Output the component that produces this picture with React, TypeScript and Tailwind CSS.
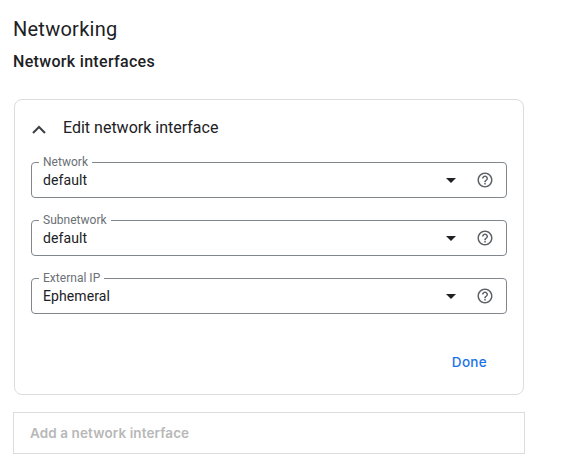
import React from "react";

function HelpIcon() {
  return (
    <svg className="block h-[18px] w-[18px]" viewBox="0 0 24 24" fill="#5f6368">
      <path d="M11 18h2v-2h-2v2zm1-16C6.48 2 2 6.48 2 12s4.48 10 10 10 10-4.48 10-10S17.52 2 12 2zm0 18c-4.41 0-8-3.59-8-8s3.59-8 8-8 8 3.59 8 8-3.59 8-8 8zm0-14c-2.21 0-4 1.79-4 4h2c0-1.1.9-2 2-2s2 .9 2 2c0 2-3 1.75-3 5h2c0-2.25 3-2.5 3-5 0-2.21-1.79-4-4-4z" />
    </svg>
  );
}

function SelectField({ label, value }: { label: string; value: string }) {
  return (
    <fieldset className="h-[44px] w-[476px] rounded-[4px] border border-[#80868b] pl-[7px]">
      <legend className="h-[16px] px-1 text-[12px] leading-[16px] tracking-[0.02px] text-[#6b7076]">{label}</legend>
      <div className="flex h-[27px] items-center pb-[7px] pl-1 pr-[12px]">
        <span className="flex-1 text-[14px] leading-5 tracking-[0.1px] text-[#202124]">{value}</span>
        <svg className="mr-[20px] h-[5px] w-[10px]" viewBox="0 0 10 5" fill="#202124">
          <path d="M0 0h10L5 5z" />
        </svg>
        <HelpIcon />
      </div>
    </fieldset>
  );
}

export default function App() {
  return (
    <main className="h-[467px] w-[578px] bg-white pl-[13px] pt-[15px] font-['Roboto',sans-serif] text-[#202124]">
      <h1 className="text-[20px] leading-7 tracking-[0.25px]">Networking</h1>
      <h2 className="mt-[9px] text-[16px] font-medium leading-5 tracking-[0.32px]">Network interfaces</h2>
      <section className="ml-px mt-[27px] h-[296px] w-[510px] rounded-[8px] border border-[#dadce0] px-4 pt-[16px]">
        <div className="flex h-6 items-center">
          <svg className="mt-[2px] h-[14px] w-[16px]" viewBox="0 0 16 14" fill="none" stroke="#3c4043" strokeWidth="2">
            <path d="M2 11 8 5l6 6" />
          </svg>
          <h3 className="ml-4 text-[16px] leading-6">Edit network interface</h3>
        </div>
        <div className="mt-[14px] flex flex-col gap-[14px]">
          <SelectField label="Network" value="default" />
          <SelectField label="Subnetwork" value="default" />
          <SelectField label="External IP" value="Ephemeral" />
        </div>
        <div className="mt-[38px] flex justify-end pr-[20px]">
          <button className="font-['Inter',sans-serif] text-[13.5px] font-medium leading-5 tracking-[0.3px] text-[#1a73e8]">Done</button>
        </div>
      </section>
      <button className="mt-[17px] flex h-[42px] w-[512px] items-center border border-[#dadce0] pl-4 pt-px font-['Inter',sans-serif] text-[13.5px] font-semibold tracking-[0.1px] text-[#b8b8b8]">
        Add a network interface
      </button>
    </main>
  );
}
